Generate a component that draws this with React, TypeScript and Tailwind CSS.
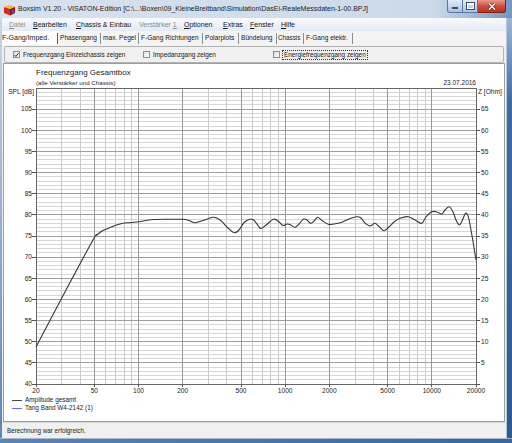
import React from "react";

const MENU = [
  { pre: "", key: "D", rest: "atei", w: 24, off: true },
  { pre: "", key: "B", rest: "earbeiten", w: 43 },
  { pre: "", key: "C", rest: "hassis & Einbau", w: 63 },
  { pre: "Verstärker ", key: "1", rest: "", w: 45, off: true },
  { pre: "", key: "O", rest: "ptionen", w: 39 },
  { pre: "", key: "E", rest: "xtras", w: 27 },
  { pre: "", key: "F", rest: "enster", w: 31 },
  { pre: "", key: "H", rest: "ilfe", w: 30 },
];

const TABS = [
  { label: "F-Gang/Imped.", w: 56 },
  { label: "Phasengang", w: 43 },
  { label: "max. Pegel", w: 38 },
  { label: "F-Gang Richtungen", w: 64 },
  { label: "Polarplots", w: 36 },
  { label: "Bündelung", w: 38 },
  { label: "Chassis", w: 27 },
  { label: "F-Gang elektr.", w: 49 },
];

// plot frame in page coordinates
const X0 = 36;
const X1 = 476;
const Y0 = 88;
const Y1 = 384;
const fx = (f: number) => X0 + ((X1 - X0) * Math.log10(f / 20)) / 3;
const fy = (db: number) => Y0 + ((110 - db) * (Y1 - Y0)) / 70;

const MAJOR_F = [50, 100, 200, 500, 1000, 2000, 5000, 10000];
const X_LABELS = [20, 50, 100, 200, 500, 1000, 2000, 5000, 10000, 20000];

const MINOR_F: number[] = [];
for (const d of [10, 100, 1000, 10000]) {
  for (let m = 1; m < 10; m++) {
    const f = m * d;
    if (f > 20 && f < 20000 && !MAJOR_F.includes(f)) MINOR_F.push(f);
  }
}

// traced from the measurement, page pixels
const CURVE: [number, number][] = [
  [36, 347], [66, 290], [93, 240], [97, 235], [102, 231], [108, 228.5], [115, 225.5],
  [122, 223.5], [132, 222.5], [139, 221.7], [153, 219.5], [170, 219.2], [183, 219.3],
  [189, 220.5], [195, 222.7], [203, 220.5], [212.7, 217.3], [217, 218.2], [222, 221.7],
  [228, 228], [234.3, 232.7], [239, 230], [244, 222.5], [250, 219.3], [254, 220.3],
  [258, 225.5], [261, 228.5], [266, 225], [273.3, 219.3], [278, 221], [283, 225.5],
  [287, 224], [291, 225], [295, 227.5], [299, 224], [303.3, 219.3], [307, 220],
  [310.7, 223.3], [314, 221], [317.7, 217.3], [322, 220.5], [328.3, 224.3], [334, 224],
  [341.7, 222.3], [350, 218.5], [356.7, 216.7], [361, 218], [365, 223], [370, 226],
  [375, 223.3], [379, 226.5], [384, 230.7], [389, 227], [394, 222], [400, 218.3],
  [408.3, 216.7], [415, 220], [421.7, 223.3], [426, 217], [431.7, 211.7], [437, 212],
  [441.7, 214], [445, 210], [449.3, 206.7], [453, 212], [456, 220], [459.3, 225],
  [462, 221], [465.7, 213.3], [468.3, 216.7], [471, 230], [476, 260],
];

function smoothPath(pts: [number, number][]) {
  let d = `M${pts[0][0]},${pts[0][1]}`;
  for (let i = 0; i < pts.length - 1; i++) {
    const p0 = pts[i - 1] ?? pts[i];
    const p1 = pts[i];
    const p2 = pts[i + 1];
    const p3 = pts[i + 2] ?? p2;
    const c1x = p1[0] + (p2[0] - p0[0]) / 6;
    const c1y = p1[1] + (p2[1] - p0[1]) / 6;
    const c2x = p2[0] - (p3[0] - p1[0]) / 6;
    const c2y = p2[1] - (p3[1] - p1[1]) / 6;
    d += ` C${c1x.toFixed(1)},${c1y.toFixed(1)} ${c2x.toFixed(1)},${c2y.toFixed(1)} ${p2[0]},${p2[1]}`;
  }
  return d;
}

function AppIcon() {
  return (
    <svg width="13" height="12" viewBox="0 0 13 12">
      <polygon points="1,3 6,1 12,3 7,5" fill="#f2c21b" />
      <polygon points="1,3 7,5 7,11.5 1,9" fill="#d8281e" />
      <polygon points="7,5 12,3 12,9 7,11.5" fill="#8e1512" />
      <rect x="8.5" y="6" width="2.5" height="3" fill="#4a4fc4" />
    </svg>
  );
}

function TitleBar() {
  return (
    <div className="flex h-[18px] shrink-0 items-start bg-gradient-to-r from-[#d7e2ee] via-[#cbd9ea] via-85% to-[#7396c4]">
      <div className="ml-[3px] mt-[4px]">
        <AppIcon />
      </div>
      <span className="ml-[2px] mt-[4px] whitespace-nowrap text-[7px] leading-[9px] text-[#1b1b1b]">
        Boxsim V1.20 - VISATON-Edition [C:\...\Boxen\09_KleineBreitband\Simulation\DasEi-RealeMessdaten-1-00.BPJ]
      </span>
      <div className="ml-auto mr-[6px] flex">
        <div className="flex h-[13px] w-[16px] items-end justify-center rounded-bl-[3px] border border-t-0 border-[#5a77a0] bg-gradient-to-b from-[#e3ecf7] to-[#a9c0de] pb-[3px]">
          <div className="h-[2px] w-[6px] border border-[#3d4f68] bg-white" />
        </div>
        <div className="flex h-[13px] w-[15px] items-center justify-center border-b border-r border-[#5a77a0] bg-gradient-to-b from-[#e3ecf7] to-[#a9c0de]">
          <div className="h-[6px] w-[7px] border-[1.5px] border-t-[2px] border-white outline outline-1 outline-[#3d4f68]" />
        </div>
        <div className="flex h-[13px] w-[28px] items-center justify-center rounded-br-[3px] border-b border-r border-[#7a2418] bg-gradient-to-b from-[#e6998c] via-[#cf4f3b] to-[#b8321f]">
          <svg width="8" height="7" viewBox="0 0 8 7">
            <path d="M1 0.5 L7 6.5 M7 0.5 L1 6.5" stroke="#5a1a12" strokeWidth="2.6" />
            <path d="M1 0.5 L7 6.5 M7 0.5 L1 6.5" stroke="#fff" strokeWidth="1.5" />
          </svg>
        </div>
      </div>
    </div>
  );
}

function MenuBar() {
  return (
    <div className="flex h-[13px] shrink-0 items-center bg-gradient-to-b from-[#f8fafd] to-[#e4eaf3] pl-[7px] text-[7px] leading-[13px]">
      {MENU.map((m) => (
        <span
          key={m.key + m.rest}
          style={{ width: m.w }}
          className={`shrink-0 whitespace-nowrap ${m.off ? "text-[#8a8a8a]" : "text-[#151515]"}`}
        >
          {m.pre}
          <span className="underline underline-offset-[1px]">{m.key}</span>
          {m.rest}
        </span>
      ))}
    </div>
  );
}

function Tabs() {
  return (
    <div className="flex h-[14px] shrink-0 items-stretch bg-[#f4f4f4] text-[6.6px] leading-[14px] text-[#161616]">
      {TABS.map((t, i) => (
        <div
          key={t.label}
          style={{ width: t.w }}
          className={`flex shrink-0 items-center whitespace-nowrap ${
            i === 0 ? "bg-[#fdfdfd] pl-0 text-[7px]" : i === 6 ? "pl-[1px] text-[6.3px]" : "pl-[2px]"
          }`}
        >
          <span className="flex-1">{t.label}</span>
          <span className={`my-[2px] h-[11px] w-px ${i === 0 ? "bg-[#5c5c5c]" : "bg-[#8c8c8c]"}`} />
        </div>
      ))}
    </div>
  );
}

function Box({ checked }: { checked?: boolean }) {
  return (
    <span className="flex h-[7px] w-[7px] shrink-0 items-center justify-center border border-[#8e8f8f] bg-gradient-to-br from-[#dcdcdc] to-white">
      {checked && (
        <svg width="6" height="6" viewBox="0 0 6 6">
          <path d="M0.6 3 L2.3 4.8 L5.4 0.9" fill="none" stroke="#262b33" strokeWidth="1.2" />
        </svg>
      )}
    </span>
  );
}

function Options() {
  return (
    <div className="mx-[2px] mt-[1px] flex h-[17px] shrink-0 items-center rounded-[2px] border border-[#b3b3b3] bg-[#f0f0f0] pl-[8px] text-[6.4px] leading-[8px] text-[#161616]">
      <div className="flex w-[130px] shrink-0 items-center gap-[3px]">
        <Box checked />
        <span className="whitespace-nowrap">Frequenzgang Einzelchassis zeigen</span>
      </div>
      <div className="flex w-[130px] shrink-0 items-center gap-[3px]">
        <Box />
        <span className="whitespace-nowrap">Impedanzgang zeigen</span>
      </div>
      <div className="flex shrink-0 items-center gap-[2px]">
        <Box />
        <span className="whitespace-nowrap border border-dotted border-[#333] px-[1px]">
          Energiefrequenzgang zeigen
        </span>
      </div>
    </div>
  );
}

function Plot() {
  const curve = smoothPath(CURVE);
  const dbs = Array.from({ length: 69 }, (_, i) => 41 + i);
  const labels = Array.from({ length: 14 }, (_, i) => 105 - i * 5);
  return (
    <svg width="500" height="309" viewBox="4 86 500 309" className="block shrink-0">
      <g shapeRendering="crispEdges" strokeWidth="1">
        {dbs
          .filter((d) => d % 5 !== 0)
          .map((d) => (
            <line key={`h${d}`} x1={X0} x2={X1} y1={fy(d)} y2={fy(d)} stroke="#d6d6d6" />
          ))}
        {MINOR_F.map((f) => (
          <line key={`v${f}`} x1={fx(f)} x2={fx(f)} y1={Y0} y2={Y1} stroke="#cbcbcb" />
        ))}
        {dbs
          .filter((d) => d % 5 === 0)
          .map((d) => (
            <line key={`H${d}`} x1={X0} x2={X1} y1={fy(d)} y2={fy(d)} stroke="#9f9f9f" />
          ))}
        {MAJOR_F.map((f) => (
          <line key={`V${f}`} x1={fx(f)} x2={fx(f)} y1={Y0} y2={Y1} stroke="#999999" />
        ))}
        <rect x={X0} y={Y0} width={X1 - X0} height={Y1 - Y0} fill="none" stroke="#666666" />
        {labels.map((d) => (
          <g key={`t${d}`}>
            <line x1={X0 - 4} x2={X0} y1={fy(d)} y2={fy(d)} stroke="#555" />
            <line x1={X1} x2={X1 + 4} y1={fy(d)} y2={fy(d)} stroke="#555" />
          </g>
        ))}
        {X_LABELS.map((f) => (
          <line key={`x${f}`} x1={fx(f)} x2={fx(f)} y1={Y1} y2={Y1 + 3} stroke="#555" />
        ))}
      </g>
      <path d={curve} fill="none" stroke="#363636" strokeWidth="1.1" />
      <g fontSize="6.6" fill="#1c1c1c">
        <text x="34" y="93.5" textAnchor="end">SPL [dB]</text>
        <text x="478" y="93.5">Z [Ohm]</text>
        {labels.map((d) => (
          <text key={`l${d}`} x={X0 - 4} y={fy(d) + 2.3} textAnchor="end">
            {d}
          </text>
        ))}
        {labels
          .filter((d) => d > 40)
          .map((d) => (
            <text key={`r${d}`} x={X1 + 5} y={fy(d) + 2.3}>
              {d - 40}
            </text>
          ))}
        {X_LABELS.map((f) => (
          <text key={`f${f}`} x={fx(f)} y="392.5" textAnchor="middle">
            {f}
          </text>
        ))}
      </g>
    </svg>
  );
}

function Chart() {
  return (
    <div className="mx-[1px] flex h-[359px] shrink-0 flex-col border border-[#9d9d9d] bg-white text-[#1c1c1c]">
      <div className="pl-[32px] pt-[5px] text-[8px] leading-[8px]">Frequenzgang Gesamtbox</div>
      <div className="mt-[3px] flex items-end justify-between pl-[32px] pr-[28px] leading-[6px]">
        <span className="text-[6.2px]">(alle Verstärker und Chassis)</span>
        <span className="text-[6.5px]">23.07.2016</span>
      </div>
      <Plot />
      <div className="mt-[1px] flex flex-col pl-[8px] text-[6.4px] leading-[8px]">
        <div className="flex items-center gap-[3px]">
          <span className="h-px w-[10px] bg-[#4a4a4a]" />
          <span>Amplitude gesamt</span>
        </div>
        <div className="flex items-center gap-[3px]">
          <span className="h-px w-[10px] bg-[#6a6aff]" />
          <span>Tang Band W4-2142 (1)</span>
        </div>
      </div>
    </div>
  );
}

function StatusBar() {
  return (
    <div className="flex h-[16px] shrink-0 items-center border-t border-[#d9d9d9] bg-[#f0f0f0] pl-[5px] text-[6.3px] leading-[15px] text-[#1a1a1a]">
      Berechnung war erfolgreich.
    </div>
  );
}

export default function App() {
  return (
    <div className="flex h-[443px] w-[512px] flex-col overflow-hidden bg-[#c9d7e8] font-['Liberation_Sans',Arial,sans-serif]">
      <TitleBar />
      <div className="flex min-h-0 flex-1">
        <div className="w-[2px] bg-gradient-to-b from-[#c9d6e6] to-[#5f84b6]" />
        <div className="flex min-w-0 flex-1 flex-col bg-[#f0f0f0]">
          <MenuBar />
          <Tabs />
          <Options />
          <Chart />
          <StatusBar />
        </div>
        <div className="w-[6px] border-l border-[#b9c6d6] bg-gradient-to-b from-[#9db7d8] via-[#3f6aa3] via-20% to-[#2e5a94]" />
      </div>
      <div className="h-[5px] shrink-0 border-t border-[#a6b8cf] bg-gradient-to-r from-[#5d82b4] to-[#3a659e]" />
    </div>
  );
}
